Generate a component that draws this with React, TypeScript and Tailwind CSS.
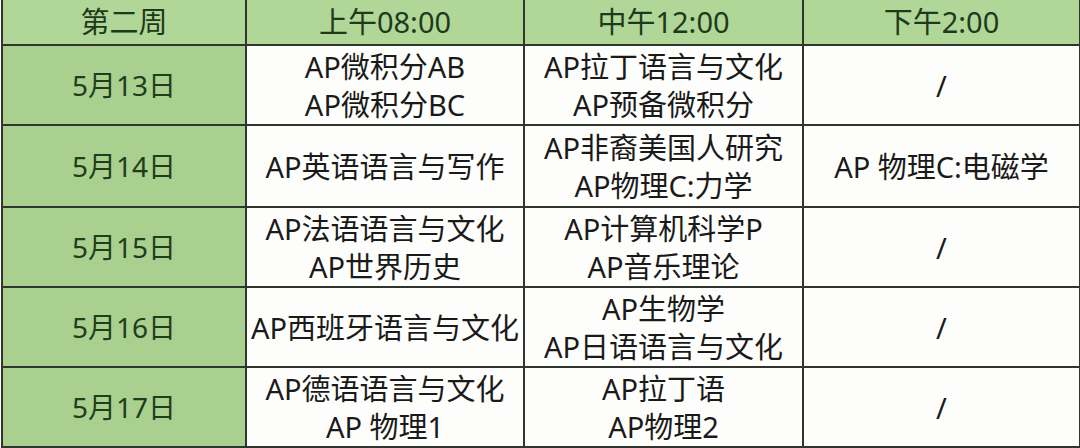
import React from 'react';

type Row = { date: string; am: string[]; noon: string[]; pm: string[] };

const rows: Row[] = [
  { date: '5月13日', am: ['AP微积分AB', 'AP微积分BC'], noon: ['AP拉丁语言与文化', 'AP预备微积分'], pm: ['/'] },
  { date: '5月14日', am: ['AP英语语言与写作'], noon: ['AP非裔美国人研究', 'AP物理C:力学'], pm: ['AP 物理C:电磁学'] },
  { date: '5月15日', am: ['AP法语语言与文化', 'AP世界历史'], noon: ['AP计算机科学P', 'AP音乐理论'], pm: ['/'] },
  { date: '5月16日', am: ['AP西班牙语言与文化'], noon: ['AP生物学', 'AP日语语言与文化'], pm: ['/'] },
  { date: '5月17日', am: ['AP德语语言与文化', 'AP 物理1'], noon: ['AP拉丁语', 'AP物理2'], pm: ['/'] },
];

const rowHeights = ['h-[80px]', 'h-[82px]', 'h-[80px]', 'h-[80px]', 'h-[79px]'];

function Lines({ items }: { items: string[] }) {
  return (
    <div className="flex flex-col items-center leading-[38px] pt-[2px]">
      {items.map((t) => (
        <span key={t} className="whitespace-nowrap">{t}</span>
      ))}
    </div>
  );
}

export default function App() {
  return (
    <div className="w-[1080px] h-[448px] bg-white font-['Noto_Sans','Noto_Sans_CJK_SC',sans-serif] overflow-hidden">
      <table className="table-fixed border-collapse w-[1078px] ml-[1px]">
        <colgroup>
          <col className="w-[244px]" />
          <col className="w-[278px]" />
          <col className="w-[279px]" />
          <col className="w-[277px]" />
        </colgroup>
        <thead>
          <tr className="h-[45px] bg-[#b0d698] text-[#1f3a1a] text-[29px]">
            <th className="font-normal border-2 border-t-0 border-[#30352e]">第二周</th>
            <th className="font-normal border-2 border-t-0 border-[#30352e]">上午08:00</th>
            <th className="font-normal border-2 border-t-0 border-[#30352e]">中午12:00</th>
            <th className="font-normal border-2 border-t-0 border-[#30352e]">下午2:00</th>
          </tr>
        </thead>
        <tbody>
          {rows.map((r, i) => (
            <tr key={r.date} className={rowHeights[i]}>
              <td className="bg-[#a9d08e] text-[#213d1c] text-[28px] text-center border-2 border-[#30352e]">{r.date}</td>
              <td className="bg-[#fdfdfb] text-[#1a1a1a] text-[29px] text-center border-2 border-[#30352e]">
                <Lines items={r.am} />
              </td>
              <td className="bg-[#fdfdfb] text-[#1a1a1a] text-[29px] text-center border-2 border-[#30352e]">
                <Lines items={r.noon} />
              </td>
              <td className="bg-[#fdfdfb] text-[#1a1a1a] text-[29px] text-center border-2 border-[#30352e]">
                <Lines items={r.pm} />
              </td>
            </tr>
          ))}
        </tbody>
      </table>
    </div>
  );
}
